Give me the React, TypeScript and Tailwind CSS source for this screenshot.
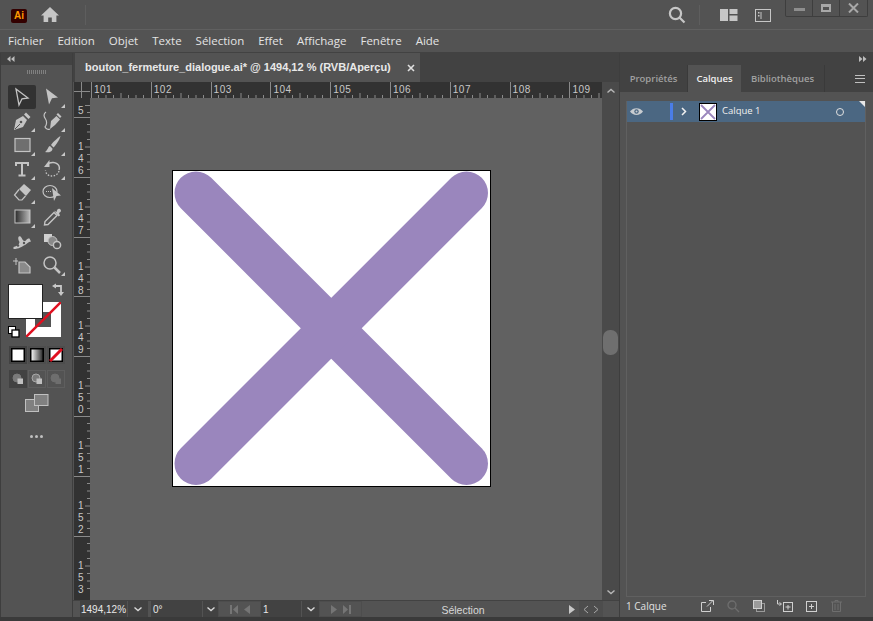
import React from "react";

const font = { fontFamily: '"Open Sans", sans-serif' };

function Corner() {
  return <span className="absolute right-[1px] bottom-[1px] w-0 h-0 border-l-[4px] border-l-transparent border-b-[4px] border-b-[#c8c8c8]" />;
}

const c = "#c4c4c4";

function Tool({ children, active, corner }: { children: React.ReactNode; active?: boolean; corner?: boolean }) {
  return (
    <div className={`relative w-[28px] h-[24px] flex items-center justify-center rounded-[2px] ${active ? "bg-[#323232]" : ""}`}>
      <svg width="20" height="20" viewBox="0 0 20 20" fill="none">{children}</svg>
      {corner && <Corner />}
    </div>
  );
}

function HRuler() {
  const labels = ["101", "102", "103", "104", "105", "106", "107", "108", "109"];
  return (
    <div className="flex h-[16px] bg-[#323232] flex-1 overflow-hidden">
      {labels.map((l) => (
        <div key={l} className="relative shrink-0 w-[59.8px] h-full border-l border-[#8a8a8a] pl-[2px] pt-[2px] text-[10px] leading-[12px] text-[#c8c8c8] tracking-[0.5px]" style={{ fontFamily: '"Liberation Sans", sans-serif' }}>
          {l}
          <svg className="absolute left-0 bottom-0" width="60" height="5" viewBox="0 0 60 5">
            {[7.5, 15, 22.5, 30, 37.5, 45, 52.5].map((x) => (
              <line key={x} x1={x - 1} x2={x - 1} y1={x === 30 ? 0 : 2} y2="5" stroke="#8a8a8a" strokeWidth="1" />
            ))}
          </svg>
        </div>
      ))}
    </div>
  );
}

function VRuler() {
  const labels = ["146", "147", "148", "149", "150", "151", "152", "153"];
  return (
    <div className="w-[16px] bg-[#323232] shrink-0 h-full overflow-hidden text-[10px] leading-[12px] text-[#c8c8c8]" style={{ fontFamily: '"Liberation Sans", sans-serif' }}>
      <div className="relative h-[19px] pl-[4px] pt-[7px]">
        5
        <svg className="absolute right-0 top-0" width="5" height="19"><line x1="0" x2="5" y1="7.5" y2="7.5" stroke="#8a8a8a" /><line x1="2" x2="5" y1="14.5" y2="14.5" stroke="#8a8a8a" /></svg>
      </div>
      {labels.map((l) => (
        <div key={l} className="relative h-[59.8px] border-t border-[#8a8a8a] pl-[4px]">
          <div className="pt-[23px] flex flex-col">
            {l.split("").map((d, i) => <span key={i}>{d}</span>)}
          </div>
          <svg className="absolute right-0 top-0" width="5" height="60" viewBox="0 0 5 60">
            {[7.5, 15, 22.5, 30, 37.5, 45, 52.5].map((y) => (
              <line key={y} y1={y - 1} y2={y - 1} x1={y === 30 ? 0 : 2} x2="5" stroke="#8a8a8a" />
            ))}
          </svg>
        </div>
      ))}
    </div>
  );
}

function Swatch({ kind, active }: { kind: "fill" | "grad" | "none"; active?: boolean }) {
  return (
    <div className={`w-[18px] h-[18px] flex items-center justify-center ${active ? "bg-[#424242]" : "bg-[#4d4d4d]"}`}>
      <svg width="14" height="14" viewBox="0 0 14 14">
        <defs>
          <linearGradient id="sg"><stop offset="0" stopColor="#fff" /><stop offset="1" stopColor="#222" /></linearGradient>
        </defs>
        <rect x="0.75" y="0.75" width="12.5" height="12.5" fill={kind === "grad" ? "url(#sg)" : "#fff"} stroke="#000" strokeWidth="1.5" />
        {kind === "none" && <line x1="1" y1="13" x2="13" y2="1" stroke="#e01020" strokeWidth="3" />}
      </svg>
    </div>
  );
}

function Chevron() {
  return (
    <svg width="10" height="10" viewBox="0 0 10 10" fill="none"><path d="M1.5 3.5 5 6.5l3.5-3" stroke="#d8d8d8" strokeWidth="1.4" /></svg>
  );
}

export default function App() {
  return (
    <div className="w-[873px] h-[621px] overflow-hidden flex flex-col bg-[#535353] text-[#e0e0e0] select-none" style={font}>
      {/* Title bar */}
      <div className="h-[30px] shrink-0 flex items-start border-b border-[#606060]">
        <div className="mt-[9px] ml-[11px] w-[16px] h-[14px] rounded-[2px] bg-[#330000] text-[#ff9a00] text-[10px] leading-[14px] text-center font-bold" style={{ fontFamily: '"Liberation Sans", sans-serif' }}>Ai</div>
        <svg className="ml-[13px] mt-[6px]" width="20" height="18" viewBox="0 0 20 18" fill="#c6c6c6"><path d="M10 1 1 9.5h2.6V16h4.6v-4.6h3.6V16h4.6V9.5H19z" /></svg>
        <div className="ml-[25px] mt-[5px] w-px h-[20px] bg-[#5e5e5e]" />
        <div className="flex-1" />
        <svg className="mt-[6px]" width="18" height="18" viewBox="0 0 18 18" fill="none" stroke="#c6c6c6" strokeWidth="2.2"><circle cx="7.5" cy="7.5" r="5.6" /><path d="M11.5 11.5 16.5 16.5" /></svg>
        <div className="ml-[13px] mt-[5px] w-px h-[20px] bg-[#5e5e5e]" />
        <svg className="ml-[20px] mt-[9px]" width="18" height="12" viewBox="0 0 18 12" fill="#c6c6c6"><rect x="0" y="0" width="8" height="12" /><rect x="9.5" y="0" width="8" height="5" /><rect x="9.5" y="6.5" width="8" height="5.5" /></svg>
        <svg className="ml-[17px] mt-[9px]" width="17" height="13" viewBox="0 0 17 13" fill="none" stroke="#c6c6c6"><rect x="0.5" y="0.5" width="15" height="12" /><rect x="3" y="3" width="1.5" height="1.5" fill="#c6c6c6" stroke="none" /><rect x="3" y="6" width="1.5" height="1.5" fill="#c6c6c6" stroke="none" /><path d="M6 3v7" /></svg>
        <div className="ml-[13px] mr-[5px] h-[17px] w-[83px] flex border border-t-0 border-[#3e3e3e] rounded-b-[2px]">
          <div className="w-[27px] border-r border-[#3e3e3e] flex items-center justify-center"><div className="w-[11px] h-[3px] mt-[3px] bg-[#8e8e8e]" /></div>
          <div className="w-[27px] border-r border-[#3e3e3e] flex items-center justify-center"><div className="w-[10px] h-[8px] border-2 border-t-[3px] border-[#a8a8a8]" /></div>
          <div className="flex-1 flex items-center justify-center">
            <svg width="11" height="10" viewBox="0 0 11 10" stroke="#a8a8a8" strokeWidth="2"><path d="M1 0.5 10 9.5M10 0.5 1 9.5" /></svg>
          </div>
        </div>
      </div>
      {/* Menu */}
      <div className="h-[23px] shrink-0 flex items-center pl-[8px] gap-[14px] text-[11.5px] text-[#e4e4e4] border-b border-[#424242]">
        {["Fichier", "Edition", "Objet", "Texte", "Sélection", "Effet", "Affichage", "Fenêtre", "Aide"].map((m) => <span key={m}>{m}</span>)}
      </div>
      {/* Main */}
      <div className="flex-1 min-h-0 flex bg-[#3a3a3a] pb-[4px]">
        {/* Toolbar */}
        <div className="w-[73px] shrink-0 border-l border-[#3e3e3e] border-r bg-[#535353] flex flex-col">
          <div className="h-[12px] bg-[#424242] flex items-center pl-[6px]">
            <svg width="8" height="6" viewBox="0 0 8 6" fill="#bdbdbd"><path d="M3.5 0v6L0 3zM7.5 0v6L4 3z" /></svg>
          </div>
          <div className="flex justify-center mt-[5px] h-[5px] gap-px">
            {Array.from({ length: 10 }).map((_, i) => <div key={i} className="w-px h-[4px] bg-[#808080]" />)}
          </div>
          <div className="grid grid-cols-[28px_28px] gap-x-[2px] ml-[7px] mt-[10px]">
            <Tool active><path d="M4 2l12 9-6 .8L7 18z" stroke={c} strokeWidth="1.3" /></Tool>
            <Tool corner><path d="M4 1.500l12 9-6 .8L7 17.500z" fill={c} /></Tool>
            {/* Pen */}
            <Tool corner><path d="M2 19 4 9l7-4 4 4-4 7z" fill={c} /><path d="M12 3.500 14 1.500 18.500 6l-2 2z" fill={c} /><path d="M3 18l5-5" stroke="#535353" /><circle cx="9" cy="11" r="1.300" fill="#535353" /></Tool>
            {/* Curvature */}
            <Tool corner><path d="M8 18 9 10l5.500-5 3.500 3.500L13 14z" fill={c} /><path d="M14.500 3.500 16 2l3.500 3.500L18 7z" fill={c} /><path d="M4 1C1 3 2 6 3.500 8 5 10 5 14 3 16c1.500 3 4 2.500 5 2" stroke={c} strokeWidth="1.200" /></Tool>
            {/* Rectangle */}
            <Tool corner><rect x="3" y="3.500" width="15" height="13" fill="#6f6f6f" stroke={c} strokeWidth="1.200" /></Tool>
            {/* Brush */}
            <Tool corner><path d="M18.500 1C15.500 3 11 7 9 10l2.500 2.500C14 10 17.500 5 18.500 1z" fill={c} /><path d="M8 11c-2 .5-2 4-5 6 3 1 7.500 0 7.500-3.500z" fill={c} /></Tool>
            {/* Type */}
            <Tool corner><path d="M4 7V4h12v3M10 4v12.500M6.500 16.500h7" stroke={c} strokeWidth="2" /></Tool>
            {/* Rotate */}
            <Tool corner><path d="M5 5.500c3-3 10-3 12 1.500.8 2 .5 3 0 4" stroke={c} strokeWidth="1.500" /><path d="M17 12c-1 4-6 6-10 4.500-2-1-3.500-3-3.500-5" stroke={c} strokeWidth="1.300" strokeDasharray="1.500 1.500" /><path d="M7.500 1v7H2z" fill={c} /></Tool>
            {/* Eraser */}
            <Tool corner><path d="M7 6 12 1l7 6-5 6z" fill={c} /><path d="M7 6.500 2.500 12 7 17h3l3.500-4" stroke={c} strokeWidth="1.200" /></Tool>
            {/* Shape builder */}
            <Tool><ellipse cx="8" cy="8.500" rx="7" ry="6" stroke={c} strokeWidth="1.200" /><path d="M4 8.500h6" stroke={c} strokeDasharray="1 1" /><path d="M10 5l9 7.500-4.500.5L12 18z" fill={c} /></Tool>
            {/* Gradient */}
            <Tool corner><defs><linearGradient id="tg"><stop offset="0" stopColor="#2a2a2a" /><stop offset="1" stopColor="#bbb" /></linearGradient></defs><rect x="3" y="3" width="15" height="13" fill="url(#tg)" stroke={c} /></Tool>
            {/* Eyedropper */}
            <Tool><path d="M2.500 18 3 14.500l9-9 3 3-9 9z" stroke={c} strokeWidth="1.400" /><path d="M12 3.500 14.500 5c.5-3 2-4 3.500-3s1.500 3-1 4L18 8.500l-1.500 1z" fill={c} /></Tool>
            {/* Puppet warp */}
            <Tool><path d="M1.500 16C5 15 7 14 7.500 11 5.500 8 6 4 8.500 5.500c1.500 1 2 4.500 4 4.500s2-3 5-2.500l1.500 3c-3 .5-4 2.500-6 3.500-3 1.500-6 4-11.500 4z" fill={c} /><circle cx="6" cy="14.500" r="1.200" fill="#535353" /><circle cx="12" cy="12" r="1.200" fill="#535353" /></Tool>
            {/* Shape blend */}
            <Tool><rect x="2" y="3" width="8" height="8" fill="#d0d0d0" /><circle cx="10.500" cy="10" r="4.500" fill="#8a8a8a" stroke={c} /><circle cx="15" cy="14" r="3.600" fill="#535353" stroke={c} strokeWidth="1.500" /></Tool>
            {/* Artboard */}
            <Tool><path d="M1 6h5M4 3v7" stroke={c} /><path d="M7 7h6l5 5v6H7z" fill="#8a8a8a" stroke={c} strokeWidth="1.200" /></Tool>
            {/* Zoom */}
            <Tool corner><circle cx="8" cy="8" r="6" stroke={c} strokeWidth="1.500" /><path d="M12.500 12.500 18 18" stroke={c} strokeWidth="2.500" /></Tool>
          </div>
          {/* Fill and stroke */}
          <div className="relative h-[53px] mt-[7px] ml-[7px] flex">
            <div className="w-[35px] h-[35px] bg-white border border-[#222] z-10 shrink-0" />
            <svg className="absolute left-[43px] top-[-1px]" width="14" height="14" viewBox="0 0 14 14" fill="none" stroke="#c8c8c8" strokeWidth="1.800"><path d="M4 3h6v7" /><path d="M1 3l4-2.500v5zM10 13l-3-4h6z" fill="#c8c8c8" stroke="none" /></svg>
            <svg className="absolute left-[18px] top-[18px]" width="35" height="35" viewBox="0 0 35 35">
              <rect x="0" y="0" width="35" height="35" fill="#fff" />
              <rect x="17" y="10" width="8" height="15" fill="#535353" />
              <rect x="9" y="17" width="16" height="8" fill="#535353" />
              <line x1="0" y1="35" x2="35" y2="0" stroke="#e01020" strokeWidth="2.500" />
            </svg>
          </div>
          <div className="ml-[7px] mt-[-11px] h-[11px]">
            <svg width="12" height="12" viewBox="0 0 12 12"><rect x="0.500" y="0.500" width="7" height="7" fill="#fff" stroke="#000" /><rect x="4" y="4" width="7" height="7" fill="#fff" stroke="#000" strokeWidth="1.300" /></svg>
          </div>
          <div className="flex gap-px ml-[8px] mt-[9px]">
            <Swatch kind="fill" active />
            <Swatch kind="grad" />
            <Swatch kind="none" />
          </div>
          <div className="flex gap-px ml-[8px] mt-[6px]">
            {[true, false, false].map((on, i) => (
              <div key={i} className={`w-[18px] h-[18px] flex items-center justify-center ${on ? "bg-[#424242]" : "border border-[#5e5e5e]"}`}>
                <svg width="12" height="12" viewBox="0 0 12 12"><circle cx="5" cy="5" r="4" fill={i === 2 ? "#6e6e6e" : "#7a7a7a"} stroke={i === 0 ? "#7a7a7a" : i === 1 ? "#a8a8a8" : "#6e6e6e"} /><rect x="5.500" y="5.500" width="5.500" height="5.500" fill={i === 2 ? "#6e6e6e" : "#c0c0c0"} /></svg>
              </div>
            ))}
          </div>
          <div className="flex justify-center mt-[6px]">
            <svg width="24" height="18" viewBox="0 0 24 18" fill="#808080" stroke="#c0c0c0"><rect x="0.500" y="5.500" width="13" height="12" /><rect x="9.500" y="0.500" width="13.500" height="11" /></svg>
          </div>
          <div className="flex justify-center gap-[2px] mt-[23px]">
            {[0, 1, 2].map((i) => <div key={i} className="w-[3px] h-[3px] rounded-full bg-[#c0c0c0]" />)}
          </div>
        </div>
        {/* Document */}
        <div className="w-[547px] shrink-0 flex flex-col bg-[#535353] border-r border-[#3e3e3e]">
          <div className="h-[29px] shrink-0 flex bg-[#424242]">
            <div className="w-[345px] ml-[2px] flex items-center bg-[#535353] pl-[10px] text-[11px] font-bold text-[#e8e8e8]" style={{ fontFamily: '"Liberation Sans", sans-serif' }}>
              bouton_fermeture_dialogue.ai* @ 1494,12 % (RVB/Aperçu)
              <svg className="ml-[16px]" width="8" height="8" viewBox="0 0 8 8" stroke="#e0e0e0" strokeWidth="1.600"><path d="M1 1l6 6M7 1 1 7" /></svg>
            </div>
          </div>
          <div className="flex-1 min-h-0 flex">
            <div className="flex-1 min-w-0 flex flex-col">
              <div className="h-[16px] shrink-0 flex">
                <div className="w-[16px] ml-[1px] shrink-0 bg-[#323232] relative">
                  <div className="absolute left-[7px] top-0 w-px h-full bg-[#8a8a8a]" />
                  <div className="absolute left-0 top-[9px] w-full h-px bg-[#8a8a8a]" />
                </div>
                <div className="w-[1px] bg-[#323232]" />
                <HRuler />
              </div>
              <div className="flex-1 min-h-0 flex">
                <div className="ml-[1px] h-full"><VRuler /></div>
                <div className="flex-1 min-w-0 bg-[#616161] pl-[82px] pt-[72px]">
                  <div className="w-[319px] h-[317px] bg-white border border-black">
                    <svg width="317" height="315" viewBox="0 0 317 315">
                      <g stroke="#9a86bd" strokeWidth="43" strokeLinecap="round">
                        <line x1="23" y1="22" x2="293.500" y2="292.500" />
                        <line x1="293.500" y1="22" x2="23" y2="292.500" />
                      </g>
                    </svg>
                  </div>
                </div>
              </div>
            </div>
            <div className="w-[17px] shrink-0 bg-[#4a4a4a] flex flex-col items-center pt-[4px] pb-[3px]">
              <svg className="rotate-180" width="10" height="10" viewBox="0 0 10 10" fill="none"><path d="M1.500 3.500 5 6.500l3.500-3" stroke="#b8b8b8" strokeWidth="1.400" /></svg>
              <div className="mt-[234px] w-[15px] h-[25px] rounded-[7px] bg-[#6f6f6f]" />
              <svg className="mt-auto" width="10" height="10" viewBox="0 0 10 10" fill="none"><path d="M1.500 3.500 5 6.500l3.500-3" stroke="#b8b8b8" strokeWidth="1.400" /></svg>
            </div>
          </div>
          {/* Status bar */}
          <div className="h-[17px] shrink-0 flex items-stretch bg-[#535353] text-[10px] leading-[17px] text-[#e8e8e8] border-t border-[#424242]" style={{ fontFamily: '"Liberation Sans", sans-serif' }}>
            <div className="w-[47px] ml-[7px] bg-[#424242] pl-[1px]">1494,12%</div>
            <div className="w-[21px] bg-[#424242] flex items-center justify-center border-l border-[#535353]"><Chevron /></div>
            <div className="w-[51px] ml-[3px] bg-[#424242] pl-[2px]">0°</div>
            <div className="w-[16px] bg-[#424242] flex items-center justify-center border-l border-[#535353]"><Chevron /></div>
            <div className="w-[43px] flex items-center justify-center gap-[6px] border border-[#4d4d4d]">
              <svg width="8" height="9" viewBox="0 0 8 9" fill="#757575"><rect x="0" width="2" height="9" /><path d="M8 0v9L3 4.500z" /></svg>
              <svg width="6" height="9" viewBox="0 0 6 9" fill="#757575"><path d="M6 0v9L0 4.500z" /></svg>
            </div>
            <div className="w-[40px] bg-[#424242] pl-[2px]">1</div>
            <div className="w-[18px] bg-[#424242] flex items-center justify-center border-l border-[#535353]"><Chevron /></div>
            <div className="w-[43px] flex items-center justify-center gap-[6px] border border-[#4d4d4d]">
              <svg width="6" height="9" viewBox="0 0 6 9" fill="#757575"><path d="M0 0v9l6-4.500z" /></svg>
              <svg width="8" height="9" viewBox="0 0 8 9" fill="#757575"><rect x="6" width="2" height="9" /><path d="M0 0v9l5-4.500z" /></svg>
            </div>
            <div className="w-[202px] text-center text-[#d8d8d8] pt-[1px] text-[10.500px]">Sélection</div>
            <div className="w-[15px] flex items-center justify-center">
              <svg width="6" height="9" viewBox="0 0 6 9" fill="#c8c8c8"><path d="M0 0v9l6-4.500z" /></svg>
            </div>
            <div className="w-[24px] flex items-center justify-center gap-[4px] bg-[#4d4d4d]">
              <svg width="6" height="9" viewBox="0 0 6 9" fill="none" stroke="#a8a8a8"><path d="M5 1 1 4.500 5 8" /></svg>
              <svg width="6" height="9" viewBox="0 0 6 9" fill="none" stroke="#a8a8a8"><path d="M1 1l4 3.500L1 8" /></svg>
            </div>
          </div>
        </div>
        {/* Right panel */}
        <div className="flex-1 min-w-0 flex flex-col bg-[#535353]">
          <div className="h-[12px] shrink-0 bg-[#424242] flex items-center justify-end pr-[6px]">
            <svg width="8" height="6" viewBox="0 0 8 6" fill="#bdbdbd"><path d="M0 0v6l3.500-3zM4 0v6l3.500-3z" /></svg>
          </div>
          <div className="h-[27px] shrink-0 flex bg-[#424242] text-[9.5px] font-semibold leading-[27px] items-stretch">
            <div className="w-[68px] text-center text-[#a0a0a0] border-r border-[#3a3a3a]">Propriétés</div>
            <div className="w-[53px] text-center text-[#f0f0f0] bg-[#535353]">Calques</div>
            <div className="w-[84px] text-center text-[#a0a0a0] border-r border-[#3a3a3a]">Bibliothèques</div>
            <div className="flex-1 flex items-center justify-end pr-[8px]">
              <div className="w-[10px] h-[8px] border-y border-[#c0c0c0] flex items-center"><div className="w-full h-px bg-[#c0c0c0]" /></div>
            </div>
          </div>
          <div className="flex-1 min-h-0 ml-[6px] mr-[7px] mt-[9px] border border-[#606060] border-t-0">
            <div className="relative h-[21px] bg-[#4b6782] flex items-center text-[9.5px] text-[#f0f0f0]">
              <svg className="ml-[3px]" width="13" height="9" viewBox="0 0 13 9"><path d="M0 4.500C3 0 10 0 13 4.500 10 9 3 9 0 4.500z" fill="#c8ccd0" /><circle cx="6.500" cy="4.500" r="2.200" fill="#4b6782" /><circle cx="6.500" cy="4.500" r="1" fill="#c8ccd0" /></svg>
              <div className="ml-[27px] w-[3px] h-[17px] bg-[#4a7de8]" />
              <svg className="ml-[8px]" width="6" height="9" viewBox="0 0 6 9" fill="none" stroke="#f0f0f0" strokeWidth="1.500"><path d="M1 1l3.500 3.500L1 8" /></svg>
              <div className="ml-[12px] w-[18px] h-[18px] bg-white border border-black">
                <svg width="16" height="16" viewBox="0 0 16 16" stroke="#9a86bd" strokeWidth="1.800"><path d="M1 1l14 14M15 1 1 15" /></svg>
              </div>
              <span className="ml-[5px]">Calque 1</span>
              <div className="ml-auto mr-[21px] w-[8px] h-[8px] rounded-full border border-[#e0e0e0]" />
              <span className="absolute right-0 top-0 w-0 h-0 border-l-[6px] border-l-transparent border-t-[6px] border-t-[#e8e8e8]" />
            </div>
          </div>
          <div className="h-[20px] shrink-0 flex items-center text-[10px] text-[#e0e0e0] pl-[6px] pb-[2px]">
            <span>1 Calque</span>
            <svg className="ml-[34px]" width="13" height="12" viewBox="0 0 13 12" fill="none" stroke="#d0d0d0"><path d="M5 2.500H.5v9h9V7M6 6.500 12 .5M8 .5h4.500V5" /></svg>
            <svg className="ml-[13px]" width="13" height="13" viewBox="0 0 13 13" fill="none" stroke="#6e6e6e" strokeWidth="1.300"><circle cx="5" cy="5" r="4" /><path d="M8 8l4 4" /></svg>
            <svg className="ml-[13px]" width="12" height="12" viewBox="0 0 12 12" stroke="#d0d0d0"><rect x="3.500" y="3.500" width="8" height="8" fill="none" stroke="#9a9a9a" /><rect x="0.500" y="0.500" width="8" height="8" fill="#9a9a9a" /></svg>
            <svg className="ml-[12px]" width="16" height="12" viewBox="0 0 16 12" fill="none" stroke="#d0d0d0"><path d="M.5 0v4h3M2.500 2.500l2 1.500-2 1.500" /><rect x="6.500" y="2.500" width="9" height="9" /><path d="M11 5v4.500M8.500 7h5" /></svg>
            <svg className="ml-[13px]" width="11" height="11" viewBox="0 0 11 11" fill="none" stroke="#d0d0d0"><rect x="0.500" y="0.500" width="10" height="10" /><path d="M5.500 3v5M3 5.500h5" /></svg>
            <svg className="ml-[14px]" width="11" height="12" viewBox="0 0 11 12" fill="none" stroke="#6e6e6e"><path d="M0 2h11M4 2V.5h3V2M1.500 2v9.500h8V2M4 4v6M7 4v6" /></svg>
          </div>
        </div>
      </div>
    </div>
  );
}
